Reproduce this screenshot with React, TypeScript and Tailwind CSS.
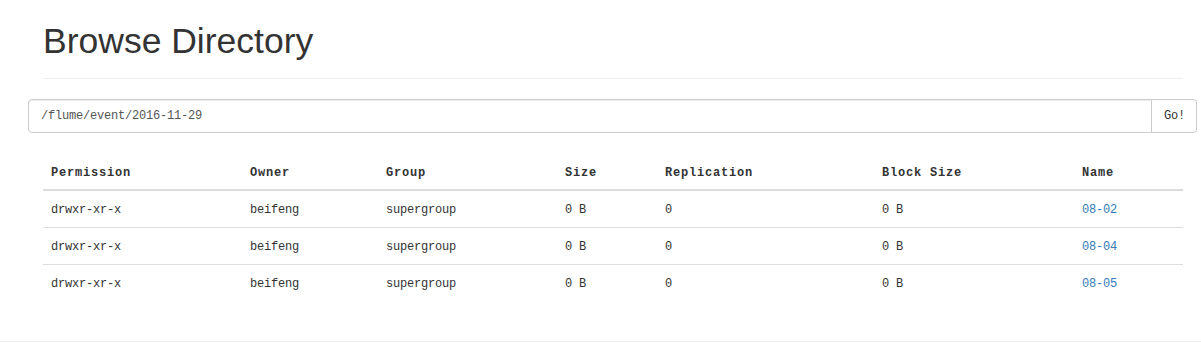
import React from 'react';

const rows = [
  { perm: 'drwxr-xr-x', owner: 'beifeng', group: 'supergroup', size: '0 B', repl: '0', block: '0 B', name: '08-02' },
  { perm: 'drwxr-xr-x', owner: 'beifeng', group: 'supergroup', size: '0 B', repl: '0', block: '0 B', name: '08-04' },
  { perm: 'drwxr-xr-x', owner: 'beifeng', group: 'supergroup', size: '0 B', repl: '0', block: '0 B', name: '08-05' },
];

const cols = [
  { label: 'Permission', w: 'w-[199px]' },
  { label: 'Owner', w: 'w-[136px]' },
  { label: 'Group', w: 'w-[179px]' },
  { label: 'Size', w: 'w-[100px]' },
  { label: 'Replication', w: 'w-[217px]' },
  { label: 'Block Size', w: 'w-[200px]' },
  { label: 'Name', w: 'w-[109px]' },
];

export default function App() {
  return (
    <div className="min-h-screen bg-white text-[#333] font-['Liberation_Sans',Arial,sans-serif]">
      <div className="pl-[28px] pr-[4px] pt-[21px]">
        {/* Page header */}
        <div className="ml-[15px] mr-[14px] pb-[17px] border-b border-[#eee]">
          <h1 className="text-[35.5px] leading-[40px] font-normal">Browse Directory</h1>
        </div>

        {/* Path input */}
        <div className="mt-[20px] flex h-[34px]">
          <input
            readOnly
            value="/flume/event/2016-11-29"
            className="flex-1 min-w-0 px-[12px] border border-[#ccc] rounded-l-[4px] shadow-[inset_0_1px_1px_rgba(0,0,0,0.075)] text-[12px] tracking-[-0.2px] text-[#555] font-['Liberation_Mono',monospace] outline-none"
          />
          <button className="w-[46px] -ml-px px-[12px] border border-[#ccc] rounded-r-[4px] bg-white text-[12px] tracking-[-0.2px] text-[#333] font-['Liberation_Mono',monospace]">
            Go!
          </button>
        </div>

        {/* Listing */}
        <table className="mt-[20px] ml-[15px] w-[1140px] border-collapse table-fixed font-['Liberation_Mono',monospace] text-[12px]">
          <thead>
            <tr>
              {cols.map((c) => (
                <th
                  key={c.label}
                  className={`${c.w} px-[8px] pt-[10px] pb-[6px] leading-[20px] text-left font-bold tracking-[0.8px] border-b-2 border-[#ddd]`}
                >
                  {c.label}
                </th>
              ))}
            </tr>
          </thead>
          <tbody>
            {rows.map((r) => (
              <tr key={r.name} className="border-t border-[#ddd] first:border-t-0">
                <td className="px-[8px] pt-[9px] pb-[7px] leading-[20px] tracking-[-0.2px]">{r.perm}</td>
                <td className="px-[8px] pt-[9px] pb-[7px] leading-[20px] tracking-[-0.2px]">{r.owner}</td>
                <td className="px-[8px] pt-[9px] pb-[7px] leading-[20px] tracking-[-0.2px]">{r.group}</td>
                <td className="px-[8px] pt-[9px] pb-[7px] leading-[20px] tracking-[-0.2px]">{r.size}</td>
                <td className="px-[8px] pt-[9px] pb-[7px] leading-[20px] tracking-[-0.2px]">{r.repl}</td>
                <td className="px-[8px] pt-[9px] pb-[7px] leading-[20px] tracking-[-0.2px]">{r.block}</td>
                <td className="px-[8px] pt-[9px] pb-[7px] leading-[20px] tracking-[-0.2px]">
                  <a href="#" className="text-[#337ab7]">{r.name}</a>
                </td>
              </tr>
            ))}
          </tbody>
        </table>
      </div>

      <div className="mt-[40px] border-t border-[#eee]" />
    </div>
  );
}
